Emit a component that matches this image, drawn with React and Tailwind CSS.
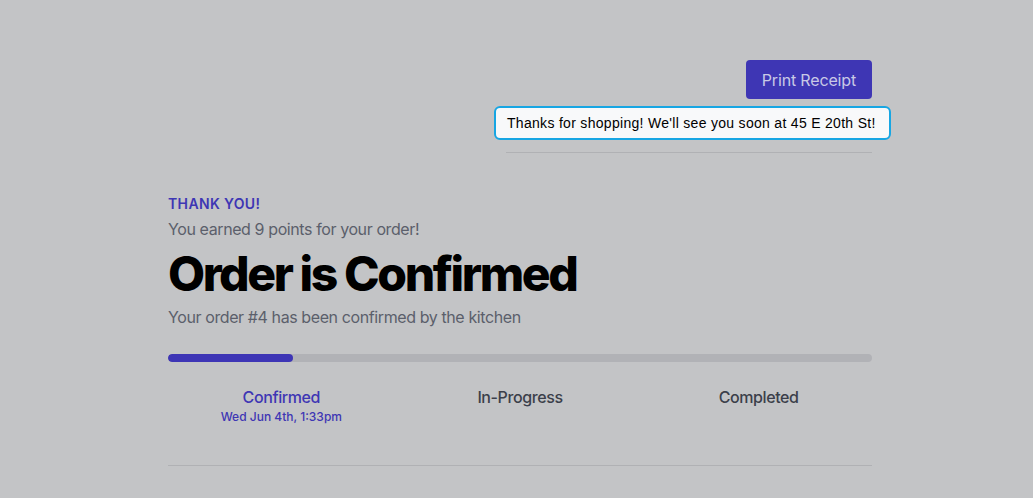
const steps = [
    { label: 'Confirmed', time: 'Wed Jun 4th, 1:33pm', active: true },
    { label: 'In-Progress' },
    { label: 'Completed' },
];

const App = () => {
    return (
        <div className="min-h-[498px] bg-[#c3c4c6] font-['Inter',sans-serif] tracking-[-0.025em]">
            <div className="relative ml-[168px] w-[704px] pt-[60px]">
                <div className="flex justify-end">
                    <button className="h-[39px] rounded px-4 bg-[#3e36b4] text-base tracking-[-0.01em] text-[#c9c9e6]">
                        Print Receipt
                    </button>
                </div>
                <div className="absolute right-[-19px] top-[106px] w-[397px] h-[34px] rounded-md border-2 border-[#17a6e3] bg-[#f8f9fa] pl-[11px] flex items-center font-['Liberation_Sans',Arial,sans-serif] text-sm tracking-[0.3px] text-black">
                    Thanks for shopping! We'll see you soon at 45 E 20th St!
                </div>
                <div className="ml-auto mt-[53px] w-[366px] border-b border-[#b0b1b4]"></div>

                <div className="pt-[41px]">
                    <p className="text-sm font-semibold tracking-wide text-[#3e36b4] uppercase">Thank you!</p>
                    <p className="mt-[3px] text-base text-[#5b5f6b]">You earned 9 points for your order!</p>
                    <h1 className="mt-[9px] text-5xl font-extrabold tracking-[-0.05em] text-black">Order is Confirmed</h1>
                    <p className="mt-[7px] text-base text-[#5b5f6b]">Your order #4 has been confirmed by the kitchen</p>

                    <div className="mt-[25px] h-2 w-full rounded-full bg-[#b1b2b6] overflow-hidden">
                        <div className="h-2 w-[125px] rounded-full bg-[#3d35b5]"></div>
                    </div>

                    <div className="mt-[23px] grid grid-cols-3 gap-3 text-center">
                        {steps.map((s) => (
                            <div key={s.label}>
                                <div className={s.active ? 'text-base font-medium text-[#3e36b4]' : 'text-base font-medium text-[#3b3f4a]'}>
                                    {s.label}
                                </div>
                                {s.time && <div className="text-xs font-medium tracking-normal text-[#3e36b4]">{s.time}</div>}
                            </div>
                        ))}
                    </div>

                    <div className="mt-[40px] border-b border-[#b0b1b4]"></div>
                </div>
            </div>
        </div>
    );
};

export default App;
